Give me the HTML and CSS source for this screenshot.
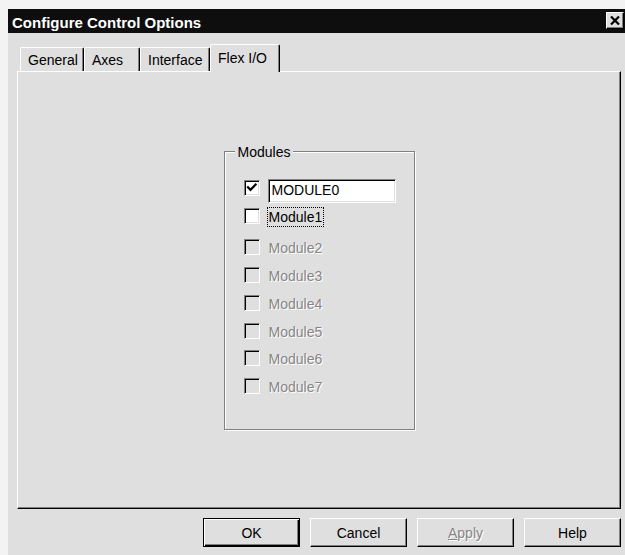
FILE: index.html
```html
<!DOCTYPE html>
<html>
<head>
<meta charset="utf-8">
<title>Configure Control Options</title>
<link rel="stylesheet" href="styles.css">
</head>
<body>
<div class="window">
  <div class="titlebar">
    <span class="title">Configure Control Options</span>
    <button class="close" aria-label="Close">
      <svg width="10" height="9" viewBox="0 0 10 9"><path d="M1 0.5 L9 8.5 M9 0.5 L1 8.5" stroke="#000" stroke-width="2.2" fill="none"/></svg>
    </button>
  </div>
  <div class="content">
    <div class="tabs">
      <div class="tab tab-general">General</div>
      <div class="tab tab-axes">Axes</div>
      <div class="tab tab-interface">Interface</div>
      <div class="tab tab-flex active">Flex I/O</div>
    </div>
    <div class="panel">
      <div class="group">
        <span class="legend">Modules</span>
        <div class="row row-0">
          <span class="check checked">
            <svg width="14" height="14" viewBox="0 0 14 14"><path d="M3 6.2 L5.5 8.8 L10.6 3.6" stroke="#000" stroke-width="2.2" fill="none" stroke-linecap="square"/></svg>
          </span>
          <span class="field">MODULE0</span>
        </div>
        <div class="row row-1">
          <span class="check"></span>
          <span class="label focus">Module1</span>
        </div>
        <div class="row row-2 disabled">
          <span class="check"></span>
          <span class="label">Module2</span>
        </div>
        <div class="row disabled">
          <span class="check"></span>
          <span class="label">Module3</span>
        </div>
        <div class="row disabled">
          <span class="check"></span>
          <span class="label">Module4</span>
        </div>
        <div class="row row-short disabled">
          <span class="check"></span>
          <span class="label">Module5</span>
        </div>
        <div class="row disabled">
          <span class="check"></span>
          <span class="label">Module6</span>
        </div>
        <div class="row disabled">
          <span class="check"></span>
          <span class="label">Module7</span>
        </div>
      </div>
    </div>
    <div class="buttons">
      <button class="btn default">OK</button>
      <button class="btn">Cancel</button>
      <button class="btn disabled"><u>A</u>pply</button>
      <button class="btn">Help</button>
    </div>
  </div>
</div>
</body>
</html>
```

FILE: styles.css
```css
html, body {
  margin: 0;
  padding: 0;
}

body {
  width: 625px;
  height: 555px;
  overflow: hidden;
  background: #f3f3f3;
  font-family: "Liberation Sans", Arial, sans-serif;
  font-size: 14px;
  color: #000;
}

.window {
  margin: 9px 0 0 8px;
  height: 546px;
  background: #dfdfdf;
}

/* caption bar */
.titlebar {
  height: 24px;
  box-sizing: border-box;
  padding: 4px 0 0 4px;
  background: #0e0e0e;
  display: flex;
  align-items: flex-start;
}

.title {
  color: #fff;
  font-weight: bold;
  font-size: 15px;
  line-height: 20px;
}

.close {
  margin: -1px 1px 0 auto;
  width: 18px;
  height: 17px;
  padding: 0;
  box-sizing: border-box;
  background: #dfdfdf;
  border: 1px solid;
  border-color: #fff #000 #000 #fff;
  box-shadow: inset -1px -1px 0 #808080;
  display: flex;
  align-items: center;
  justify-content: center;
}

.close svg {
  display: block;
}

.content {
  padding: 11px 0 0 9px;
}

/* tab strip */
.tabs {
  display: flex;
  align-items: flex-end;
  height: 27px;
  padding-left: 3px;
}

.tab {
  height: 24px;
  box-sizing: border-box;
  padding: 4px 0 0 7px;
  line-height: 16px;
  border-left: 1px solid #fff;
  border-top: 1px solid #fff;
  border-right: 1px solid #000;
  border-radius: 2px 2px 0 0;
  box-shadow: inset -1px 0 0 #808080;
  background: #dfdfdf;
  white-space: nowrap;
}

.tab-general { width: 64px; }
.tab-axes { width: 56px; }
.tab-interface { width: 70px; }
.tab-flex { width: 70px; }

.tab.active {
  height: 28px;
  margin-bottom: -1px;
  padding-top: 5px;
  position: relative;
  z-index: 1;
}

/* page area */
.panel {
  width: 604px;
  height: 438px;
  box-sizing: border-box;
  border: 1px solid;
  border-color: #fff #000 #000 #fff;
  box-shadow: inset -1px -1px 0 #808080;
  display: flex;
  align-items: center;
  justify-content: center;
}

.group {
  position: relative;
  width: 191px;
  height: 279px;
  box-sizing: border-box;
  border: 1px solid #808080;
  box-shadow: 1px 1px 0 #fff, inset 1px 1px 0 #fff;
  padding: 28px 0 0 19px;
}

.legend {
  position: absolute;
  top: -8px;
  left: 10px;
  padding: 0 3px;
  line-height: 16px;
  background: #dfdfdf;
}

.row {
  display: flex;
  align-items: flex-start;
  height: 28px;
}

.row-1 { height: 31px; }
.row-short { height: 27px; }

.check {
  width: 16px;
  height: 16px;
  box-sizing: border-box;
  border: 1px solid;
  border-color: #808080 #fff #fff #808080;
  box-shadow: inset 1px 1px 0 #000, inset -1px -1px 0 #dfdfdf;
  background: #fff;
  display: flex;
  align-items: center;
  justify-content: center;
}

.check svg {
  display: block;
}

.disabled .check {
  background: #dfdfdf;
}

.label {
  margin: -1px 0 0 7px;
  padding: 1px;
  border: 1px solid transparent;
  line-height: 16px;
  white-space: nowrap;
}

.label.focus {
  border: 1px dotted #000;
}

.disabled .label {
  color: #868686;
  text-shadow: 1px 1px 0 #fff;
}

.field {
  margin: -1px 0 0 8px;
  width: 128px;
  height: 24px;
  box-sizing: border-box;
  padding: 2px 3px;
  line-height: 16px;
  border: 1px solid;
  border-color: #808080 #fff #fff #808080;
  box-shadow: inset 1px 1px 0 #000, inset -1px -1px 0 #dfdfdf;
  background: #fff;
}

/* command buttons */
.buttons {
  width: 604px;
  margin-top: 9px;
  display: flex;
  justify-content: flex-end;
  gap: 10px;
}

.btn {
  width: 97px;
  height: 29px;
  box-sizing: border-box;
  padding: 0;
  font-family: "Liberation Sans", Arial, sans-serif;
  font-size: 14px;
  color: #000;
  background: #dfdfdf;
  border: 1px solid;
  border-color: #fff #000 #000 #fff;
  box-shadow: inset -1px -1px 0 #808080;
}

.btn.default {
  border: 1px solid #000;
  box-shadow: inset 1px 1px 0 #fff, inset -1px -1px 0 #000, inset -2px -2px 0 #808080;
}

.btn.disabled {
  color: #868686;
  text-shadow: 1px 1px 0 #fff;
}
```
